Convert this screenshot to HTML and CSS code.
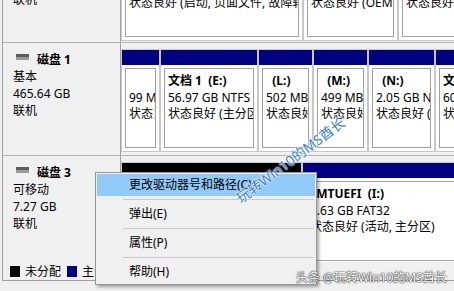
FILE: index.html
```html
<!DOCTYPE html>
<html lang="zh-CN">
<head>
  <meta charset="UTF-8">
  <title>磁盘管理</title>
  <link rel="stylesheet" href="styles.css">
</head>
<body>
  <div class="pane">
    <div class="view">
      <!-- 磁盘 0 (只露出底部) -->
      <div class="disk disk-top">
        <div class="disk-head">
          <div class="disk-title">
            <svg class="disk-icon" width="13" height="6" viewBox="0 0 13 6"><rect width="13" height="6" fill="#9a9a9a"/><rect width="13" height="3" fill="#5c5c5c"/></svg>
            <span>磁盘 0</span>
          </div>
          <div>基本</div>
          <div>465.76 GB</div>
          <div>联机</div>
        </div>
        <div class="disk-parts">
          <div class="part vol-c">
            <div class="part-bar"></div>
            <div class="part-body">
              <div class="part-name">&nbsp;&nbsp;(C:)</div>
              <div>120.00 GB NTFS</div>
              <div>状态良好 (启动, 页面文件, 故障转储, 主分区)</div>
            </div>
          </div>
          <div class="part vol-oem">
            <div class="part-bar"></div>
            <div class="part-body">
              <div class="part-name">&nbsp;</div>
              <div>450 MB</div>
              <div>状态良好 (OEM 分区)</div>
            </div>
          </div>
          <div class="part vol-rest">
            <div class="part-bar"></div>
            <div class="part-body">
              <div class="part-name">&nbsp;</div>
              <div>500 MB</div>
              <div>状态良好 (恢复分区)</div>
            </div>
          </div>
        </div>
      </div>

      <!-- 磁盘 1 -->
      <div class="disk">
        <div class="disk-head">
          <div class="disk-title">
            <svg class="disk-icon" width="13" height="6" viewBox="0 0 13 6"><rect width="13" height="6" fill="#9a9a9a"/><rect width="13" height="3" fill="#5c5c5c"/></svg>
            <span>磁盘 1</span>
          </div>
          <div>基本</div>
          <div>465.64 GB</div>
          <div>联机</div>
        </div>
        <div class="disk-parts">
          <div class="part vol-efi">
            <div class="part-bar"></div>
            <div class="part-body">
              <div class="part-name">&nbsp;</div>
              <div>99 MB</div>
              <div>状态良好 (EFI 系统分区)</div>
            </div>
          </div>
          <div class="part vol-e">
            <div class="part-bar"></div>
            <div class="part-body">
              <div class="part-name">文档 1&nbsp;&nbsp;(E:)</div>
              <div>56.97 GB NTFS</div>
              <div>状态良好 (主分区)</div>
            </div>
          </div>
          <div class="part vol-l">
            <div class="part-bar"></div>
            <div class="part-body">
              <div class="part-name">&nbsp;&nbsp;(L:)</div>
              <div>502 MB NTFS</div>
              <div>状态良好 (主分区)</div>
            </div>
          </div>
          <div class="part vol-m">
            <div class="part-bar"></div>
            <div class="part-body">
              <div class="part-name">&nbsp;&nbsp;(M:)</div>
              <div>499 MB NTFS</div>
              <div>状态良好 (主分区)</div>
            </div>
          </div>
          <div class="part vol-n">
            <div class="part-bar"></div>
            <div class="part-body">
              <div class="part-name">&nbsp;&nbsp;(N:)</div>
              <div>2.05 GB NTFS</div>
              <div>状态良好 (主分区)</div>
            </div>
          </div>
          <div class="part vol-f">
            <div class="part-bar"></div>
            <div class="part-body">
              <div class="part-name">文档 2&nbsp;&nbsp;(F:)</div>
              <div>60.00 GB NTFS</div>
              <div>状态良好 (主分区)</div>
            </div>
          </div>
        </div>
      </div>

      <!-- 磁盘 3 -->
      <div class="disk">
        <div class="disk-head">
          <div class="disk-title">
            <svg class="disk-icon" width="13" height="6" viewBox="0 0 13 6"><rect width="13" height="6" fill="#9a9a9a"/><rect width="13" height="3" fill="#5c5c5c"/></svg>
            <span>磁盘 3</span>
          </div>
          <div>可移动</div>
          <div>7.27 GB</div>
          <div>联机</div>
        </div>
        <div class="disk-parts">
          <div class="part part-free vol-free">
            <div class="part-bar"></div>
            <div class="part-body">
              <div class="part-name">&nbsp;</div>
              <div>649 MB</div>
              <div>未分配</div>
            </div>
          </div>
          <div class="part vol-i">
            <div class="part-bar"></div>
            <div class="part-body">
              <div class="part-name">&nbsp;&nbsp;MTUEFI&nbsp;&nbsp;(I:)</div>
              <div>6.63 GB FAT32</div>
              <div>状态良好 (活动, 主分区)</div>
            </div>
          </div>
        </div>
      </div>
    </div>
  </div>

  <div class="legend">
    <div class="legend-item"><span class="swatch swatch-free"></span>未分配</div>
    <div class="legend-item"><span class="swatch swatch-primary"></span>主分区</div>
  </div>
  <div class="status"></div>

  <!-- 右键菜单 -->
  <div class="menu">
    <div class="menu-item active">更改驱动器号和路径(C)...</div>
    <div class="menu-sep"></div>
    <div class="menu-item">弹出(E)</div>
    <div class="menu-sep"></div>
    <div class="menu-item">属性(P)</div>
    <div class="menu-sep"></div>
    <div class="menu-item">帮助(H)</div>
  </div>

  <div class="wm-diag">玩转Win10的MS酋长</div>
  <div class="wm-credit">头条 @玩转Win10的MS酋长</div>
</body>
</html>
```

FILE: styles.css
```css
* {
  box-sizing: border-box;
}
body {
  margin: 0;
  width: 454px;
  height: 291px;
  overflow: hidden;
  position: relative;
  background: #f0f0f0;
  color: #000;
  font-family: "Noto Sans", "Noto Sans CJK SC", sans-serif;
  font-size: 12px;
}

/* 图形视图 (已向下滚动) */
.pane {
  height: 262px;
  margin-left: 2px;
  border-left: 1px solid #a0a0a0;
  overflow: hidden;
}
.view {
  margin-top: -69px;
}
.disk {
  display: flex;
  height: 113px;
  border-top: 1px solid #b4b4b4;
}
.disk-top {
  height: 111px;
}
.disk-head {
  flex: none;
  width: 118px;
  padding: 8px 0 0 10px;
  line-height: 17px;
  background: #f0f0f0;
  border-right: 1px solid #a0a0a0;
}
.disk-title {
  display: flex;
  align-items: center;
  gap: 8px;
  padding-left: 3px;
  font-weight: bold;
}
.disk-icon {
  margin-bottom: 5px;
}
.disk-parts {
  flex: 1;
  min-width: 0;
  display: flex;
  padding: 6px 0 3px 0;
  background: #f0f0f0;
  overflow: hidden;
}
.disk-top .disk-parts {
  padding-bottom: 1px;
}

/* 分区 */
.part {
  flex: none;
  display: flex;
  flex-direction: column;
  height: 103px;
  background: #fff;
  border: 1px solid #c8c8c8;
}
.part-bar {
  height: 15px;
  background: #000080;
}
.part-free .part-bar {
  background: #000;
}
.part-body {
  flex: 1;
  margin: 3px;
  padding: 4px 0 0 3px;
  border: 1px solid #a0a0a0;
  line-height: 16.5px;
  white-space: nowrap;
  overflow: hidden;
}
.part-name {
  font-weight: bold;
}
.vol-c { width: 182px; }
.vol-oem { width: 95px; }
.vol-rest { width: 120px; }
.vol-efi { width: 39px; }
.vol-e { width: 98px; }
.vol-l { width: 55px; }
.vol-m { width: 55px; }
.vol-n { width: 67px; }
.vol-f { width: 120px; }
.vol-free { width: 181px; }
.vol-i { width: 160px; }

/* 图例 */
.legend {
  display: flex;
  align-items: center;
  height: 19px;
  margin-left: 2px;
  padding-left: 7px;
  border-left: 1px solid #a0a0a0;
  border-bottom: 1px solid #a0a0a0;
}
.legend-item {
  display: flex;
  align-items: center;
  gap: 5px;
  margin-right: 6px;
}
.swatch {
  width: 10px;
  height: 11px;
}
.swatch-free {
  background: #000;
}
.swatch-primary {
  background: #000080;
}
.status {
  height: 10px;
}

/* 右键菜单 */
.menu {
  position: absolute;
  left: 95px;
  top: 172px;
  width: 222px;
  padding: 1px;
  background: #f0f0f0;
  border: 1px solid #979797;
  box-shadow: 2px 2px 3px rgba(0, 0, 0, 0.35);
}
.menu-item {
  height: 22px;
  line-height: 22px;
  padding-left: 32px;
  white-space: nowrap;
}
.menu-item.active {
  background: #91c9f7;
}
.menu-sep {
  height: 1px;
  margin: 3px 1px 3px 26px;
  background: #cacaca;
}

/* 水印 */
.wm-diag {
  position: absolute;
  left: 238px;
  top: 192px;
  line-height: 16px;
  font-size: 14px;
  color: #3b82d6;
  white-space: nowrap;
  transform-origin: 0 50%;
  transform: rotate(-37deg);
  text-shadow: 0 0 1px #fff, 0 0 2px #fff, 0 0 2px #fff;
}
.wm-credit {
  position: absolute;
  left: 296px;
  top: 270px;
  line-height: 16px;
  font-size: 12px;
  color: #fff;
  white-space: nowrap;
  text-shadow: 0 0 1px #333, 0 0 1px #333, 0 0 2px rgba(0, 0, 0, 0.6);
}
```
